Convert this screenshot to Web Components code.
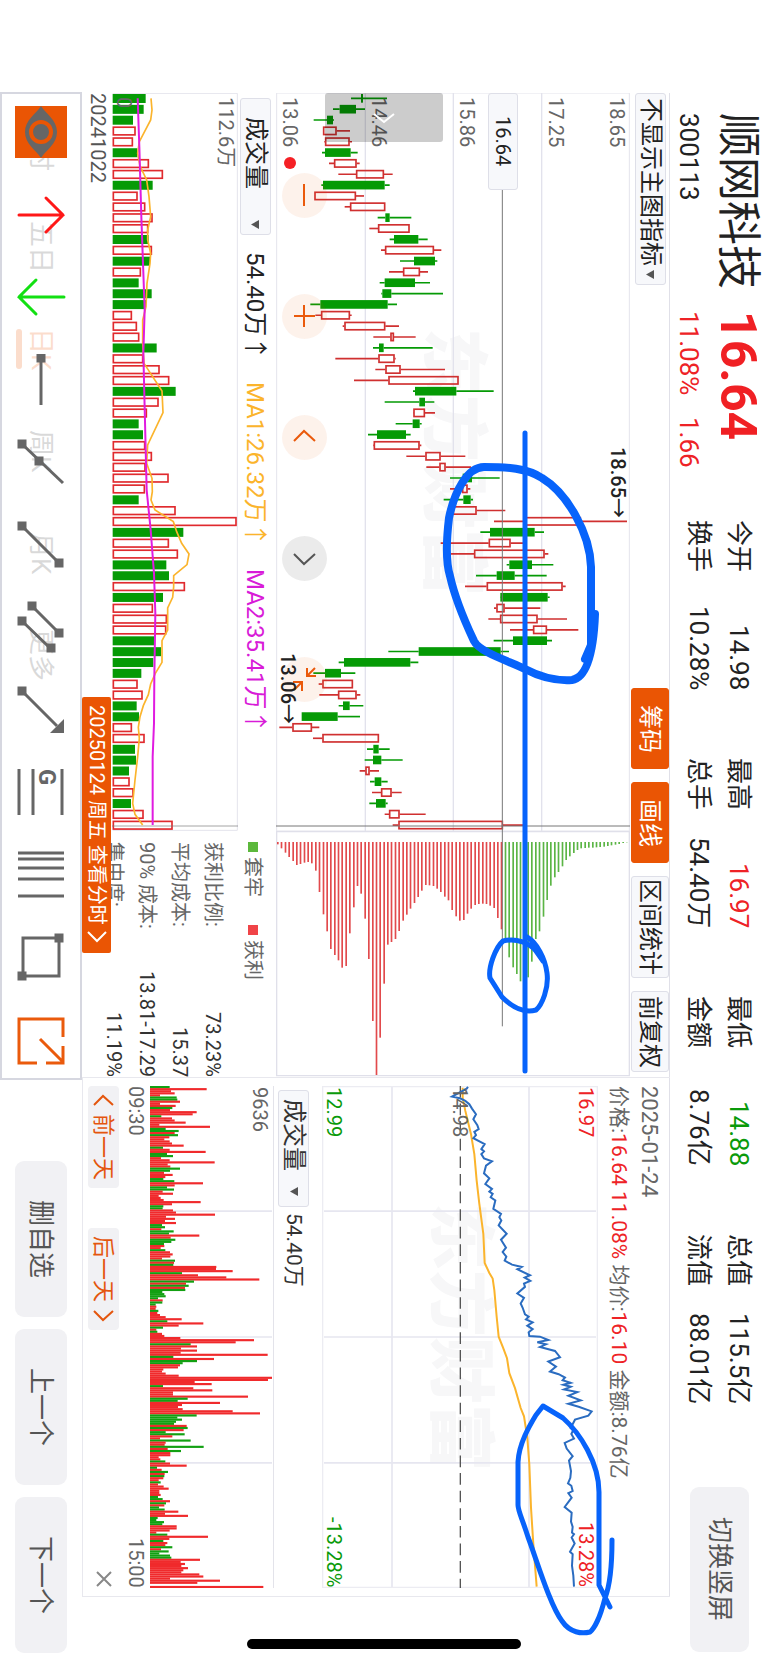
<!DOCTYPE html>
<html lang="zh-CN">
<head>
<meta charset="utf-8">
<meta name="viewport" content="width=device-width, initial-scale=1">
<title>顺网科技 300113</title>
<style>
    html, body {
        margin: 0;
        height: 100%;
        background: #fff;
        overflow: hidden;
    }
    /* the screen is held sideways, so lines run from top to bottom */
    body {
        writing-mode: vertical-rl;
        text-orientation: sideways;
        font-family: Roboto, "Noto Sans CJK SC", sans-serif;
        font-size: 20px;
        line-height: 28px;
        color: #222;
    }
</style>
</head>
<body>
<stock-screen></stock-screen>

<script>
const BASE = `
    <style>
        * { box-sizing: border-box; }
        :host { display: block; box-sizing: border-box; }
        :host([hidden]) { display: none; }
        button, select {
            font: inherit; color: inherit; margin: 0; padding: 0; border: 0; background: none;
            writing-mode: vertical-rl; text-orientation: sideways; cursor: pointer; white-space: nowrap;
        }
        svg { display: block; }
    </style>`;

class Base extends HTMLElement {
    constructor() {
        super();
        this.attachShadow({ mode: 'open' });
        this.shadowRoot.innerHTML = BASE + this.view();
    }
    view() { return '<slot></slot>'; }
}

const RED = '#d03030';
const GREEN = '#059a05';
const points = list => list.map(p => p.join(',')).join(' ');

/* ---------- small parts ---------- */

class ToolButton extends Base {
    view() {
        return `
        <style>
            :host { display: flex; }
            button {
                flex: 1; min-inline-size: 81px; padding-inline: 2px; font-size: 24px; line-height: 36px;
                border: 1px solid #dedfe8; border-radius: 3px; background: #f7f8fb;
            }
            :host([on]) button { background: #ea5504; border-color: #ea5504; color: #fff; }
        </style>
        <button type="button"><slot></slot></button>`;
    }
}

class DropDown extends Base {
    view() {
        return `
        <style>
            :host {
                display: flex; align-items: center; block-size: 31px; font-size: 24px; line-height: 29px;
                border: 1px solid #dedfe8; border-radius: 3px; background: #f7f8fb;
                padding-inline: 4px 5px;
            }
            select { appearance: none; flex: 1; line-height: 29px; block-size: 29px; outline: 0; }
            svg { flex: none; }
        </style>
        <select><option></option></select>
        <svg width="8" height="9" viewBox="0 0 8 9"><path d="M8 0V9L0 4.5Z" fill="#555"/></svg>`;
    }
    connectedCallback() {
        const select = this.shadowRoot.querySelector('select');
        select.setAttribute('aria-label', this.getAttribute('label'));
        select.options[0].text = this.getAttribute('value');
    }
}

class SoftButton extends Base {
    view() {
        return `
        <style>
            :host { display: flex; }
            button { flex: 1; background: #f1f1f4; border-radius: 9px; color: #555; font-size: 26px; line-height: 36px; }
        </style>
        <button type="button"><slot></slot></button>`;
    }
}

class StatItem extends Base {
    view() {
        return `
        <style>
            :host { display: flex; justify-content: space-between; line-height: 40px; font-size: 26px; }
            :host([up]) slot[name=value] { color: #ee2226; }
            :host([down]) slot[name=value] { color: #0a9a0a; }
            slot[name=value] { display: block; }
        </style>
        <span><slot></slot></span><slot name="value"></slot>`;
    }
}

/* ---------- header ---------- */

class QuoteHeader extends Base {
    view() {
        const stats = [
            ['今开', '14.98', ''], ['最高', '16.97', 'up'], ['最低', '14.88', 'down'], ['总值', '115.5亿', ''],
            ['换手', '10.28%', ''], ['总手', '54.40万', ''], ['金额', '8.76亿', ''], ['流值', '88.01亿', '']
        ];
        return `
        <style>
            :host { display: flex; block-size: 98px; padding-inline: 113px 13px; }
            .name { display: grid; grid-template-columns: 198px 1fr; grid-template-rows: 60px 38px; flex: 0 0 407px; }
            h1 { margin: 0; font-size: 44px; line-height: 60px; font-weight: 400; }
            .price { font-size: 50px; line-height: 60px; font-weight: 700; color: #f02024; }
            .code, .change { font-size: 26px; line-height: 38px; }
            .change { display: flex; gap: 22px; color: #ee2226; }
            .stats {
                display: grid; grid-template-columns: repeat(4, 170px); grid-template-rows: 40px 40px;
                column-gap: 68px; padding-block-start: 9px;
            }
            soft-button { margin-inline-start: auto; inline-size: 165px; block-size: 59px; margin-block-start: 19px; }
        </style>
        <div class="name">
            <h1>顺网科技</h1><span class="price">16.64</span>
            <span class="code">300113</span>
            <span class="change"><span>11.08%</span><span>1.66</span></span>
        </div>
        <div class="stats">
            ${stats.map(s => `<stat-item ${s[2]}>${s[0]}<span slot="value">${s[1]}</span></stat-item>`).join('')}
        </div>
        <soft-button>切换竖屏</soft-button>`;
    }
}

/* ---------- daily chart ---------- */

// low, body from, body to, high, colour
const CANDLES = [
    [285,315,321,393,'g'],[231,251,300,327,'g'],[173,213,231,234,'g'],[201,201,242,282,'r'],[205,207,281,288,'r'],
    [198,207,284,305,'g'],[219,234,302,311,'r'],[247,300,384,410,'r'],[196,201,386,401,'g'],[175,175,300,324,'r'],
    [266,282,388,388,'r'],[365,388,401,466,'g'],[340,366,461,461,'r'],[401,414,487,515,'g'],[375,387,534,556,'r'],
    [432,474,537,544,'g'],[399,441,492,516,'r'],[371,386,477,522,'g'],[376,379,406,561,'g'],[163,193,395,423,'g'],
    [178,195,282,287,'r'],[260,265,388,429,'r'],[352,403,414,479,'r'],[351,369,383,530,'g'],[238,367,416,419,'r'],
    [358,388,434,567,'r'],[294,397,608,608,'r'],[471,477,601,713,'g'],[386,490,507,535,'g'],[471,472,507,537,'r'],
    [419,470,491,497,'g'],[336,363,450,464,'g'],[351,353,491,496,'r'],[451,508,554,628,'r'],[511,550,569,645,'r'],
    [582,620,648,731,'g'],[582,618,635,643,'r'],[563,622,644,651,'g'],[585,590,662,748,'r'],[714,808,975,1113,'r'],
    [673,702,836,864,'g'],[554,698,764,803,'r'],[585,654,866,877,'r'],[752,760,828,892,'g'],[660,722,776,872,'g'],
    [627,692,920,929,'r'],[732,733,875,881,'g'],[714,721,746,853,'r'],[697,732,845,933,'r'],[762,831,873,967,'r'],
    [713,771,873,888,'g'],[397,488,734,759,'g'],[248,264,463,487,'g'],[172,207,255,298,'g'],[188,199,291,291,'r'],
    [190,246,302,313,'r'],[248,261,281,322,'g'],[137,137,245,312,'g'],[70,109,168,190,'r'],[171,199,369,369,'r'],
    [333,352,368,401,'g'],[326,351,376,440,'g'],[311,328,341,369,'r'],[342,356,376,395,'g'],[348,375,407,437,'r'],
    [340,360,389,395,'g'],[386,399,431,509,'r'],[410,427,741,801,'r']
];
const STEP = 32.54;
const rowY = i => 16 + i * STEP;

class KlineChart extends Base {
    view() {
        const bars = CANDLES.map(([low, from, to, high, c], i) => {
            const y = rowY(i);
            const color = c === 'g' ? GREEN : RED;
            return `<path d="M${low} ${y}H${from}M${to} ${y}H${high}" stroke="${color}" stroke-width="5"/>` +
                (c === 'g'
                    ? `<rect x="${from}" y="${y - 13}" width="${to - from}" height="26" fill="${color}"/>`
                    : `<rect x="${from + 2}" y="${y - 11}" width="${Math.max(to - from - 4, 3)}" height="22" fill="none" stroke="${color}" stroke-width="5"/>`);
        }).join('');
        const icons = [
            '<path d="M22 11V33"/>',
            '<path d="M22 11V33M12 22H33"/>',
            '<path d="M12 26L22 16L33 26"/>',
            '<path d="M12 18L22 28L33 18"/>',
            '<path d="M33 11L25 19M25 11V19H34M12 33L20 25M11 25H20V34"/>'
        ];
        const names = ['缩小', '放大', '左移', '右移', '收起'];
        return `
        <style>
            :host { display: grid; grid-template: minmax(0, 1fr) / minmax(0, 1fr); position: relative; }
            :host > * { grid-area: 1 / 1; }
            .plot { inline-size: 100%; block-size: 100%; pointer-events: none; }
            .mark { place-self: center; font-size: 67px; line-height: 70px; font-weight: 900; color: #f7f7f8; }
            .axis { display: grid; grid-template-rows: repeat(4, 1fr); padding-inline: 4px; color: #666; line-height: 27px; }
            .axis div { display: flex; flex-direction: column; justify-content: flex-end; }
            .axis div:first-child { justify-content: space-between; }
            .pan { position: absolute; inset-block-end: 49px; inset-inline-start: 0; inline-size: 49px; block-size: 118px; background: rgba(0, 0, 0, .2); border-radius: 3px; display: grid; place-items: center; }
            .controls { align-self: end; display: flex; gap: 76px; padding-inline-start: 80px; padding-block-end: 6px; }
            .controls button { inline-size: 45px; block-size: 45px; border-radius: 50%; background: rgba(234, 85, 4, .08); }
            .controls button:nth-child(4) { background: rgba(0, 0, 0, .08); }
            .controls path { stroke: #ea5a0c; stroke-width: 2; fill: none; }
            .controls button:nth-child(4) path { stroke: #555; }
            .live { position: absolute; inset-block-end: 8px; inset-inline-start: 64px; inline-size: 12px; block-size: 12px; border-radius: 50%; background: #f52025; }
            output, .peak { position: absolute; line-height: 28px; color: #222; }
            .peak { font-weight: 500; }
            output { inset-block-start: 112px; inset-inline-start: 0; inline-size: 97px; text-align: center; background: #f7f8fb; border: 1px solid #dedfe8; border-radius: 3px; }
            .high { inset-block-start: -2px; inset-inline-start: 354px; }
            .low { inset-block-end: -2px; inset-inline-start: 560px; }
        </style>
        <span class="mark">东方财富</span>
        <svg class="plot" viewBox="60 0 1062 2214" preserveAspectRatio="none">
            <path d="M328 0V2214M592 0V2214M857 0V2214" stroke="#e2e2ec" stroke-width="4"/>
            <path d="M62 0H1120V2214H62Z" fill="none" stroke="#e4e4ec" stroke-width="3"/>
            ${bars}
            <path d="M739 290V2214M60 2199H1122" stroke="#777" stroke-width="3" fill="none"/>
        </svg>
        <div class="axis">
            <div><span>18.65</span><span>17.25</span></div>
            <div><span>15.86</span></div>
            <div><span>14.46</span></div>
            <div><span>13.06</span></div>
        </div>
        <div class="pan"><svg width="22" height="12" viewBox="0 0 22 12"><path d="M1 2L11 10L21 2" stroke="#fff" stroke-width="2" fill="none"/></svg></div>
        <i class="live"></i>
        <div class="controls">
            ${icons.map((d, i) => `<button type="button" aria-label="${names[i]}"><svg width="45" height="45">${d}</svg></button>`).join('')}
        </div>
        <output>16.64</output>
        <span class="peak high">18.65→</span>
        <span class="peak low">13.06→</span>`;
    }
}

/* ---------- volume under the daily chart ---------- */

const VOLUME = ('437g 431g 399g 407r 399r 412g 447r 489r 458g 413r 436r 458r 445r 446g 456r 450g 423r 416g 455g 438g ' +
    '396r 411r 418r 470g 430r 479r 508r 527g 476r 441r 416g 429g 436r 456r 437r 506r 435r 416g 527r 710r ' +
    '550g 507r 534r 499g 507g 555r 489g 459r 501r 499r 465g 483g 460g 424g 413r 428r 410g 417g 396r 434r ' +
    '405g 408g 387g 389r 401r 393g 431r 518r').split(' ');
const MA1 = [[453,16],[456,51],[452,81],[418,146],[413,181],[420,219],[440,261],[447,311],[452,371],[443,411],[443,441],
    [452,481],[450,511],[441,571],[438,641],[428,681],[428,751],[432,811],[486,894],[489,959],[443,1056],[440,1111],
    [456,1156],[457,1196],[453,1221],[465,1251],[520,1286],[530,1316],[545,1351],[567,1383],[561,1415],[521,1448],
    [521,1481],[518,1513],[503,1545],[503,1611],[486,1643],[486,1708],[466,1741],[452,1773],[445,1805],[430,1838],
    [420,1871],[415,1903],[418,1936],[413,1991],[405,2061],[398,2131],[405,2164],[428,2196]];
const MA2 = [[413,16],[418,161],[424,371],[434,651],[430,781],[440,1191],[452,1311],[462,1441],[466,1561],[463,1751],
    [462,1891],[458,1991],[458,2196]];

class VolumeChart extends Base {
    view() {
        const bars = VOLUME.map((v, i) => {
            const end = parseInt(v);
            const y = rowY(i);
            return v.endsWith('g')
                ? `<rect x="338" y="${y - 13}" width="${end - 338}" height="27" fill="${GREEN}"/>`
                : `<rect x="340" y="${y - 11}" width="${end - 342}" height="23" fill="none" stroke="#e02a2e" stroke-width="5"/>`;
        }).join('');
        return `
        <style>
            :host { display: grid; grid-template: minmax(0, 1fr) / minmax(0, 1fr); }
            :host > * { grid-area: 1 / 1; }
            svg { inline-size: 100%; block-size: 100%; }
            .axis { display: flex; flex-direction: column; justify-content: space-between; padding-inline: 4px; color: #666; line-height: 24px; }
        </style>
        <svg viewBox="336 0 378 2214" preserveAspectRatio="none">
            <path d="M338 1H712V2212H338" fill="none" stroke="#e4e4ec" stroke-width="3"/>
            ${bars}
            <path d="M336 2199H714" stroke="#777" stroke-width="2"/>
            <polyline points="${points(MA1)}" fill="none" stroke="#fbb42c" stroke-width="5"/>
            <polyline points="${points(MA2)}" fill="none" stroke="#e01be0" stroke-width="6"/>
        </svg>
        <div class="axis"><span>112.6万</span><span>0</span></div>`;
    }
}

/* ---------- chip distribution ---------- */

const CHIPS = [76,88,101,114,126,138,135,131,129,133,155,219,286,337,390,408,424,446,441,343,265,201,224,299,420,606,
    768,656,494,377,369,360,336,305,287,269,252,234,215,198,199,201,209,219,233,244,273,292,305,303,284,269,258,255,
    254,255,260,267,297,331,
    360,415,445,465,487,490,475,428,360,337,293,243,200,175,159,142,123,112,102,93,88,87,86,86,85,84,83,81,79,77,75,72,70];

class ChipChart extends Base {
    view() {
        return `
        <style>
            :host { display: grid; grid-template: minmax(0, 1fr) / minmax(0, 1fr); }
            svg { inline-size: 100%; block-size: 100%; }
        </style>
        <svg viewBox="60 36 1062 738" preserveAspectRatio="none">
            <path d="M62 38H1120V770H62Z" fill="none" stroke="#e0e0ea" stroke-width="4"/>
            ${CHIPS.map((end, i) => `<rect x="${Math.round(63 + i * 11.38)}" y="69" width="5" height="${end - 69}" fill="${i < 60 ? '#e24a4c' : '#5bb545'}"/>`).join('')}
            <path d="M739 36V622" stroke="#777" stroke-width="3"/>
        </svg>`;
    }
}

class ChipSummary extends Base {
    view() {
        return `
        <style>
            :host { padding-inline: 11px 0; color: #666; line-height: 33px; }
            .legend { display: flex; gap: 28px; line-height: 44px; block-size: 47px; }
            .legend span { display: flex; align-items: center; gap: 5px; }
            .legend i { inline-size: 10px; block-size: 10px; background: #5cb83c; }
            .legend span + span i { background: #f04448; }
            dl { margin: 0; }
            dl div { display: flex; justify-content: space-between; }
            dd { margin: 0; color: #333; }
        </style>
        <div class="legend"><span><i></i>套牢</span><span><i></i>获利</span></div>
        <dl>
            <div><dt>获利比例:</dt><dd>73.23%</dd></div>
            <div><dt>平均成本:</dt><dd>15.37</dd></div>
            <div><dt>90% 成本:</dt><dd>13.81-17.29</dd></div>
            <div><dt>集中度:</dt><dd>11.19%</dd></div>
        </dl>`;
    }
}

class DailyPanel extends Base {
    view() {
        return `
        <style>
            :host {
                display: grid; grid-template-columns: minmax(0, 738fr) minmax(0, 246fr);
                grid-template-rows: 40px minmax(0, 354fr) 38px minmax(0, 126fr) 30px;
            }
            .tools { grid-column: 1 / 3; display: flex; align-items: center; gap: 13px; padding-inline-end: 5px; }
            .tools drop-down { inline-size: 192px; margin-inline-end: auto; }
            .info { display: flex; align-items: center; gap: 22px; font-size: 24px; line-height: 34px; padding-inline-start: 5px; padding-block-start: 4px; white-space: nowrap; }
            .info drop-down { inline-size: 137px; padding-inline-start: 18px; margin-inline-end: -5px; }
            .info span:nth-of-type(2) { color: #fbb42c; }
            .info span:nth-of-type(3) { color: #d81bd8; }
            chip-summary { grid-area: 3 / 2 / 6 / 3; }
            volume-chart { grid-area: 4 / 1; }
            .dates { grid-area: 5 / 1; display: flex; color: #555; line-height: 28px; position: relative; }
            .dates button {
                position: absolute; inset-block-start: 1px; inset-inline-start: 604px; display: flex; align-items: center;
                inline-size: 256px; block-size: 29px; padding-inline-start: 8px; gap: 6px;
                background: #ea5504; color: #fff; border-radius: 2px;
            }
        </style>
        <div class="tools">
            <drop-down label="主图指标" value="不显示主图指标"></drop-down>
            <tool-button on>筹码</tool-button><tool-button on>画线</tool-button>
            <tool-button>区间统计</tool-button><tool-button>前复权</tool-button>
        </div>
        <kline-chart></kline-chart>
        <chip-chart></chip-chart>
        <div class="info">
            <drop-down label="副图指标" value="成交量"></drop-down>
            <span>54.40万↑</span><span>MA1:26.32万↑</span><span>MA2:35.41万↑</span>
        </div>
        <chip-summary></chip-summary>
        <volume-chart></volume-chart>
        <div class="dates">
            <span>20241022</span>
            <button type="button">20250124 周五 查看分时<svg width="20" height="12"><path d="M1 1L10 10L19 1" fill="none" stroke="#fff" stroke-width="2"/></svg></button>
        </div>`;
    }
}

/* ---------- one day panel ---------- */

const PRICE = [[438,3],[434,8],[390,32],[414,37],[430,45],[442,55],[450,68],[462,85],[454,100],[466,118],[470,130],[457,138],
    [462,148],[454,157],[488,175],[478,190],[486,197],[478,205],[486,218],[510,227],[492,240],[486,263],[502,278],[490,295],
    [510,310],[502,318],[512,325],[506,335],[520,345],[514,370],[537,385],[532,395],[538,405],[530,420],[554,445],[537,463],
    [552,487],[542,500],[553,514],[548,526],[570,538],[599,545],[586,552],[624,570],[608,577],[625,587],[606,595],[609,605],
    [586,625],[606,638],[596,655],[602,668],[609,688],[620,695],[612,703],[632,712],[616,722],[632,732],[620,742],[622,753],
    [654,755],[679,765],[646,772],[672,778],[654,786],[699,798],[714,817],[679,830],[702,845],[684,860],[710,868],[729,878],
    [722,886],[746,894],[724,900],[746,906],[726,914],[766,922],[739,933],[776,947],[739,957],[770,966],[809,980],[799,993],
    [759,1005],[746,1030],[754,1036],[748,1048],[756,1062],[728,1075],[734,1092],[752,1115],[741,1128],[747,1160],[745,1180],
    [738,1197],[748,1204],[752,1220],[739,1226],[749,1240],[728,1268],[749,1285],[747,1312],[752,1328],[750,1345],[756,1350],
    [749,1360],[758,1378],[744,1403],[752,1410],[750,1445],[754,1475],[756,1508]];
const AVERAGE = [[422,5],[422,35],[430,75],[447,145],[457,205],[464,285],[472,355],[484,445],[488,533],[502,563],[512,580],
    [517,615],[524,695],[530,755],[544,790],[555,820],[562,865],[579,910],[596,970],[606,995],[616,1060],[622,1140],
    [627,1270],[634,1380],[644,1508]];

class DayPriceChart extends Base {
    view() {
        return `
        <style>
            :host { display: grid; grid-template: minmax(0, 1fr) / minmax(0, 1fr); }
            :host > * { grid-area: 1 / 1; }
            svg { inline-size: 100%; block-size: 100%; }
            .mark { place-self: center; font-size: 67px; line-height: 70px; font-weight: 900; color: #f7f7f8; }
            .axis { display: flex; flex-direction: column; justify-content: space-between; line-height: 24px; color: #666; padding-inline: 1px; }
            .rate { text-align: end; }
            .axis :first-child { color: #ee2226; }
            .axis :last-child { color: #0a9a0a; }
        </style>
        <span class="mark">东方财富</span>
        <svg viewBox="0 0 828 1512" preserveAspectRatio="none">
            <path d="M210 0V1512M621 0V1512M6 377H822M6 756H822M6 1135H822" stroke="#e6e6f0" stroke-width="5"/>
            <path d="M2 2H826V1510H2Z" fill="none" stroke="#ececf2" stroke-width="4"/>
            <path d="M415 0V1512" stroke="#555" stroke-width="4" stroke-dasharray="35 18"/>
            <polyline points="${points(AVERAGE)}" fill="none" stroke="#fbb42c" stroke-width="6"/>
            <polyline points="${points(PRICE)}" fill="none" stroke="#2a6cc0" stroke-width="6"/>
        </svg>
        <div class="axis"><span>16.97</span><span>14.98</span><span>12.99</span></div>
        <div class="axis rate"><span>13.28%</span><span>-13.28%</span></div>`;
    }
}

// minute index : length, colour
const SPIKES = {
    1: '170r', 5: '80g', 6: '82g', 7: '90r', 12: '140r', 13: '128r', 17: '107r', 19: '180r', 21: '86g', 23: '84g', 28: '101r',
    31: '167r', 36: '194r', 39: '90g', 46: '159r', 55: '152r', 58: '38g', 61: '195r', 65: '78r', 71: '148r', 75: '42g',
    86: '199r', 87: '198r', 88: '248r', 89: '96g', 90: '144r', 91: '229r', 92: '328r', 93: '132g', 94: '108r', 95: '116g',
    96: '105r', 97: '106g', 111: '95r', 112: '52g', 113: '160r', 114: '86r', 121: '312r', 122: '257r', 123: '122g',
    124: '141r', 126: '141r', 128: '353r', 130: '192r', 131: '141g', 134: '84r', 139: '366r', 140: '354r', 141: '134r',
    142: '185r', 144: '130r', 145: '187r', 148: '294r', 149: '113g', 151: '210r', 153: '84r', 154: '98r', 155: '248r',
    156: '330r', 157: '140g', 158: '82g', 159: '96g', 160: '78g', 161: '72g', 162: '110r', 163: '113g', 164: '101r',
    166: '104g', 169: '122g', 172: '161g', 174: '93g', 181: '110r', 203: '85r', 205: '114r', 210: '80r', 211: '80r',
    215: '174r', 217: '40g', 220: '67g', 223: '28g', 224: '60g', 225: '64g', 226: '150r', 228: '105r', 230: '114r',
    231: '100r', 233: '148r', 234: '160r', 235: '60r', 236: '210r', 237: '142r', 238: '0r', 239: '340r'
};
const level = i => i < 80 ? 58 : i < 98 ? 70 : i < 120 ? 34 : i < 168 ? 72 : i < 200 ? 44 : i < 226 ? 42 : 72;

class DayVolumeChart extends Base {
    view() {
        let seed = 7;
        const next = () => (seed = (seed * 1103515245 + 12345) % 2147483648) / 2147483648;
        let bars = '';
        for (let i = 0; i < 240; i++) {
            const a = next();
            const b = next();
            const spike = SPIKES[i];
            const size = spike ? parseInt(spike) : Math.round(level(i) * (.45 + .95 * a));
            const green = spike ? spike.endsWith('g') : b < .3;
            bars += `<rect x="0" y="${(i * 6.3).toFixed(1)}" width="${size}" height="6.5" fill="${green ? '#12a012' : '#f02a2c'}"/>`;
        }
        return `
        <style>
            :host { display: grid; grid-template: minmax(0, 1fr) / minmax(0, 1fr); }
            :host > * { grid-area: 1 / 1; }
            svg { inline-size: 100%; block-size: 100%; }
            span { color: #666; line-height: 28px; padding-inline-start: 1px; }
        </style>
        <svg viewBox="0 0 372 1512" preserveAspectRatio="none">
            <path d="M0 377H366M0 756H366M0 1135H366" stroke="#e6e6f0" stroke-width="5"/>
            <path d="M372 0V1512" stroke="#dedee6" stroke-width="5"/>
            ${bars}
        </svg>
        <span>9636</span>`;
    }
}

class DayPanel extends Base {
    view() {
        return `
        <style>
            :host {
                display: flex; flex-direction: column; padding-inline: 8px; padding-block-start: 6px;
                border-inline: 1px solid #e8e8ee; border-block-end: 1px solid #e8e8ee; font-size: 21px; color: #666;
            }
            .line { line-height: 30px; white-space: nowrap; }
            .line b { font-weight: 400; color: #ee2226; }
            .date { font-size: 22px; }
            day-price-chart { flex: 276 1 0; margin-block-start: 6px; min-block-size: 0; font-size: 20px; }
            .pick { display: flex; align-items: center; gap: 6px; block-size: 48px; padding-block-start: 9px; padding-inline-start: 4px; color: #333; line-height: 31px; }
            .pick drop-down { inline-size: 117px; padding-inline: 8px 10px; }
            day-volume-chart { flex: 124 1 0; min-block-size: 0; font-size: 20px; }
            .row { display: flex; justify-content: space-between; line-height: 28px; font-size: 20px; }
            .days { display: flex; gap: 40px; padding-block: 3px 5px; }
            .days button {
                display: flex; align-items: center; justify-content: center; gap: 8px; inline-size: 102px; block-size: 31px;
                border-radius: 4px; background: #f1f1f4; color: #e4560e; font-size: 22px; line-height: 31px;
            }
            .days button:last-child { margin-inline-start: auto; inline-size: 18px; background: none; }
        </style>
        <div class="line date">2025-01-24</div>
        <div class="line">价格:<b>16.64</b> <b>11.08%</b> 均价:<b>16.10</b> 金额:8.76亿</div>
        <day-price-chart></day-price-chart>
        <div class="pick"><drop-down label="分时指标" value="成交量"></drop-down><span>54.40万</span></div>
        <day-volume-chart></day-volume-chart>
        <div class="row"><span>09:30</span><span>15:00</span></div>
        <div class="days">
            <button type="button"><svg width="21" height="12"><path d="M1 11L10 2L20 11" fill="none" stroke="#e4560e" stroke-width="2"/></svg>前一天</button>
            <button type="button">后一天<svg width="21" height="12"><path d="M1 1L10 10L20 1" fill="none" stroke="#e4560e" stroke-width="2"/></svg></button>
            <button type="button" aria-label="关闭"><svg width="16" height="16"><path d="M1 1L15 15M15 1L1 15" stroke="#888" stroke-width="2"/></svg></button>
        </div>`;
    }
}

/* ---------- pen strokes over both panels ---------- */

class PenStrokes extends Base {
    view() {
        return `
        <style>
            :host { pointer-events: none; }
            svg { inline-size: 100%; block-size: 100%; overflow: visible; }
            path { fill: none; stroke: #0763fb; stroke-linecap: round; stroke-linejoin: round; stroke-width: 5; }
            .thick { stroke-width: 8; }
        </style>
        <svg viewBox="0 0 588 1504" preserveAspectRatio="none">
            <path d="M443 340V978"/>
            <path class="thick" d="M503 566L509 552V474C508 440 485 400 460 385C445 375 425 374 402 374C385 374 372 400 367 425C364 450 364 470 368 483C374 510 385 533 392 548C398 560 430 569 443 576C460 585 475 588 490 587C508 584 512 548 513 521"/>
            <path d="M445 844C455 850 463 865 465 880C467 895 460 912 454 917C440 921 428 912 420 904L408 885C406 875 413 855 421 848C435 845 448 850 454 858L461 868"/>
            <path d="M530 1447C530 1470 529 1490 523 1505C518 1525 512 1536 508 1539C500 1541 488 1540 480 1528C468 1512 455 1468 446 1444C440 1425 436 1418 436 1412V1369C437 1350 448 1332 454 1322L461 1313L481 1325C498 1340 517 1370 517 1399V1492L528 1514"/>
        </svg>`;
    }
}

/* ---------- footer ---------- */

const node = (x, y) => `<rect x="${x - 4.5}" y="${y - 4.5}" width="9" height="9" fill="#666" stroke="none"/>`;
const DRAW_TOOLS = [
    ['显示', '<rect width="52" height="52" fill="#ea5504" stroke="none"/><path d="M26 0C31 8 42 14 42 26C42 38 31 44 26 52C21 44 10 38 10 26C10 14 21 8 26 0Z" fill="#666" stroke="none"/><circle cx="26" cy="26" r="10" fill="#666" stroke="#ea5504" stroke-width="4"/>'],
    ['上箭头', '<path d="M4 26H48M31 9L48 26L31 43" stroke="#ff1818" stroke-linecap="round"/>'],
    ['下箭头', '<path d="M49 26H4M21 9L4 26L21 43" stroke="#12e012" stroke-linecap="round"/>'],
    ['水平线', '<path d="M26 4V51"/>' + node(26, 4)],
    ['射线', '<path d="M7 8L48 47"/>' + node(7, 8) + node(24, 25)],
    ['线段', '<path d="M7 7L44 44"/>' + node(7, 7) + node(44, 44)],
    ['平行线', '<path d="M17 5L44 32M7 20L36 48"/>' + node(17, 5) + node(44, 32) + node(7, 20) + node(36, 47)],
    ['箭头线', '<path d="M7 7L42 42"/><path d="M49 35V49H35Z" fill="#666" stroke="none"/>' + node(7, 7)],
    ['黄金分割', '<path d="M4 3V49M18 3V49M47 3V49"/><text transform="translate(24 3) rotate(90)" font-size="24" font-weight="700" fill="#666" stroke="none">G</text>'],
    ['时间周期', '<path d="M3 4H49M3 10H49M3 19H49M3 30H49M3 47H49"/>'],
    ['矩形', '<rect x="8" y="7" width="36" height="38"/>' + node(44, 7) + node(7, 45)],
    ['分享', '<path d="M48 23V5H4V49H22M31 49H48V32M25 25L47 47" stroke="#ea5a0c" stroke-width="3"/>']
];

class DrawToolbar extends Base {
    view() {
        return `
        <style>
            :host {
                display: flex; align-items: center; justify-content: space-between; padding-inline: 12px;
                border: 2px solid #d6d7e0; background: rgba(255, 255, 255, .8);
            }
            button { inline-size: 52px; block-size: 52px; }
            svg { fill: none; stroke: #666; stroke-width: 3; writing-mode: horizontal-tb; }
        </style>
        ${DRAW_TOOLS.map(t => `<button type="button" aria-label="${t[0]}"><svg width="52" height="52" viewBox="0 0 52 52">${t[1]}</svg></button>`).join('')}`;
    }
}

class PeriodTabs extends Base {
    view() {
        return `
        <style>
            :host { display: flex; font-size: 26px; line-height: 52px; }
            a { inline-size: 102px; color: #444; text-decoration: none; display: flex; flex-direction: column; align-items: center; }
            a.on { color: #ea5504; }
            a.on::after { content: ""; inline-size: 40px; block-size: 6px; border-radius: 3px; background: #ea5504; margin-block-start: -7px; }
        </style>
        ${['分时', '五日', '日K', '周K', '月K', '更多'].map(t => `<a href="#" class="${t === '日K' ? 'on' : ''}"><span>${t}</span></a>`).join('')}`;
    }
}

class StockScreen extends Base {
    view() {
        return `
        <style>
            :host { display: flex; flex-direction: column; inline-size: 100%; block-size: 100vw; position: relative; }
            main {
                flex: 1; min-block-size: 0; display: grid; grid-template-columns: minmax(0, 984fr) minmax(0, 520fr);
                grid-template-rows: minmax(0, 1fr); margin-inline: 93px 68px; box-shadow: inset -1px 0 #e0e0e8;
            }
            daily-panel { grid-area: 1 / 1; }
            day-panel { grid-area: 1 / 2; }
            pen-strokes { grid-area: 1 / 1 / 2 / 3; z-index: 1; }
            footer { display: flex; align-items: center; block-size: 82px; gap: 12px; padding-inline: 94px 12px; position: relative; }
            period-tabs { margin-inline-end: auto; }
            draw-toolbar { position: absolute; inset-block: 0; inset-inline-start: 92px; inline-size: 988px; }
            footer soft-button { inline-size: 156px; block-size: 52px; }
            .home { position: absolute; inset-inline-end: 16px; inset-block: 247px; inline-size: 10px; border-radius: 5px; background: #000; }
        </style>
        <quote-header></quote-header>
        <main>
            <daily-panel></daily-panel>
            <day-panel></day-panel>
            <pen-strokes></pen-strokes>
        </main>
        <footer>
            <period-tabs></period-tabs>
            <soft-button>删自选</soft-button><soft-button>上一个</soft-button><soft-button>下一个</soft-button>
            <draw-toolbar></draw-toolbar>
        </footer>
        <div class="home"></div>`;
    }
}

customElements.define('tool-button', ToolButton);
customElements.define('drop-down', DropDown);
customElements.define('soft-button', SoftButton);
customElements.define('stat-item', StatItem);
customElements.define('quote-header', QuoteHeader);
customElements.define('kline-chart', KlineChart);
customElements.define('volume-chart', VolumeChart);
customElements.define('chip-chart', ChipChart);
customElements.define('chip-summary', ChipSummary);
customElements.define('daily-panel', DailyPanel);
customElements.define('day-price-chart', DayPriceChart);
customElements.define('day-volume-chart', DayVolumeChart);
customElements.define('day-panel', DayPanel);
customElements.define('pen-strokes', PenStrokes);
customElements.define('draw-toolbar', DrawToolbar);
customElements.define('period-tabs', PeriodTabs);
customElements.define('stock-screen', StockScreen);
</script>
</body>
</html>
